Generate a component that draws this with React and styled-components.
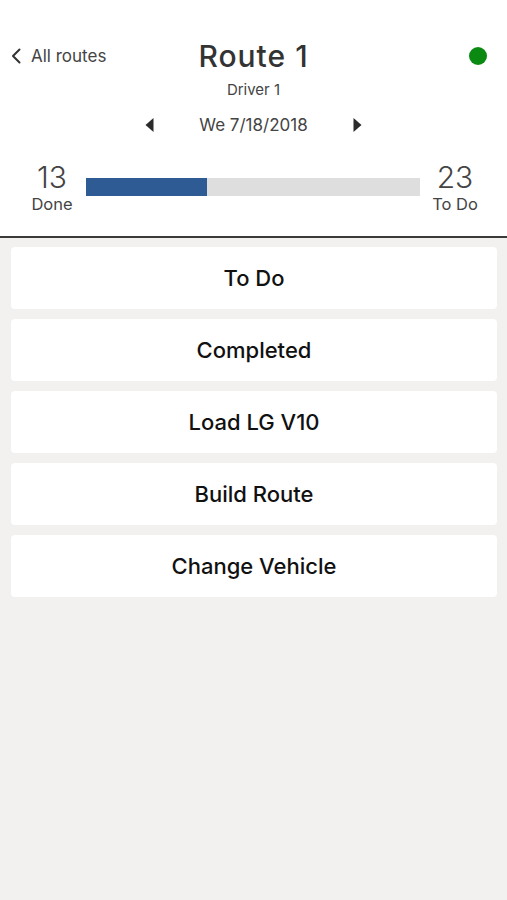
import React from "react";
import styled, { createGlobalStyle } from "styled-components";

const Global = createGlobalStyle`
  html, body { margin: 0; padding: 0; background: #f2f1ef; }
  body { font-family: Inter, "Open Sans", "Liberation Sans", sans-serif; -webkit-font-smoothing: antialiased; }
`;

const Page = styled.div`
  min-height: 900px;
  background: #f2f1ef;
`;

const Header = styled.header`
  background: #fff;
  padding-top: 38px;
  border-bottom: 2px solid #3a3a3a;
`;

const TopRow = styled.div`
  display: grid;
  grid-template-columns: 1fr auto 1fr;
  align-items: center;
  height: 36px;
  padding: 0 20px;
`;

const Back = styled.div`
  display: flex;
  align-items: center;
  gap: 10px;
  margin-left: -9px;
  color: #444;
  font-size: 17px;
  justify-self: start;
`;

const Title = styled.h1`
  margin: 0;
  font-size: 30px;
  font-weight: 500;
  color: #333;
  letter-spacing: 1px;
  line-height: 36px;
`;

const Dot = styled.span`
  justify-self: end;
  width: 18px;
  height: 18px;
  border-radius: 50%;
  background: #0b8a12;
`;

const Sub = styled.div`
  text-align: center;
  font-size: 15px;
  color: #444;
  margin-top: 6px;
  line-height: 20px;
`;

const DateRow = styled.div`
  display: flex;
  justify-content: center;
  align-items: center;
  gap: 45px;
  margin-top: 14px;
  height: 22px;
  font-size: 17px;
  color: #444;
`;

const Progress = styled.div`
  display: grid;
  grid-template-columns: 68px 1fr 70px;
  align-items: start;
  margin-top: 26px;
  padding: 0 17px 20px 18px;
`;

const Stat = styled.div`
  display: flex;
  flex-direction: column;
  align-items: center;
  color: #444;
`;

const Num = styled.div`
  font-size: 30px;
  font-weight: 300;
  line-height: 30px;
`;

const Label = styled.div`
  font-size: 16.5px;
  line-height: 24px;
`;

const Track = styled.div`
  margin-top: 16px;
  height: 18px;
  background: #dedede;
`;

const Fill = styled.div`
  height: 100%;
  background: #2e5b93;
`;

const List = styled.div`
  display: flex;
  flex-direction: column;
  gap: 10px;
  padding: 9px 10px 0 11px;
`;

const Card = styled.button`
  height: 62px;
  border: none;
  border-radius: 4px;
  background: #fff;
  font-family: inherit;
  font-size: 22px;
  font-weight: 500;
  color: #111;
  display: flex;
  align-items: center;
  justify-content: center;
  cursor: pointer;
`;

const Tri = ({ dir }) => (
  <svg width="9" height="14" viewBox="0 0 9 14">
    {dir === "left" ? (
      <path d="M8.5 0 L8.5 14 L0.5 7 Z" fill="#2b2b2b" />
    ) : (
      <path d="M0.5 0 L0.5 14 L8.5 7 Z" fill="#2b2b2b" />
    )}
  </svg>
);

const items = ["To Do", "Completed", "Load LG V10", "Build Route", "Change Vehicle"];

export default function App() {
  const done = 13;
  const todo = 23;
  return (
    <Page>
      <Global />
      <Header>
        <TopRow>
          <Back>
            <svg width="10" height="16" viewBox="0 0 10 16">
              <path d="M8.5 1.5 L2 8 L8.5 14.5" stroke="#333" strokeWidth="2" fill="none" strokeLinecap="round" strokeLinejoin="round" />
            </svg>
            All routes
          </Back>
          <Title>Route 1</Title>
          <Dot />
        </TopRow>
        <Sub>Driver 1</Sub>
        <DateRow>
          <Tri dir="left" />
          <span>We 7/18/2018</span>
          <Tri dir="right" />
        </DateRow>
        <Progress>
          <Stat>
            <Num>{done}</Num>
            <Label>Done</Label>
          </Stat>
          <Track>
            <Fill style={{ width: `${(done / (done + todo)) * 100}%` }} />
          </Track>
          <Stat>
            <Num>{todo}</Num>
            <Label>To Do</Label>
          </Stat>
        </Progress>
      </Header>
      <List>
        {items.map((t) => (
          <Card key={t}>{t}</Card>
        ))}
      </List>
    </Page>
  );
}
